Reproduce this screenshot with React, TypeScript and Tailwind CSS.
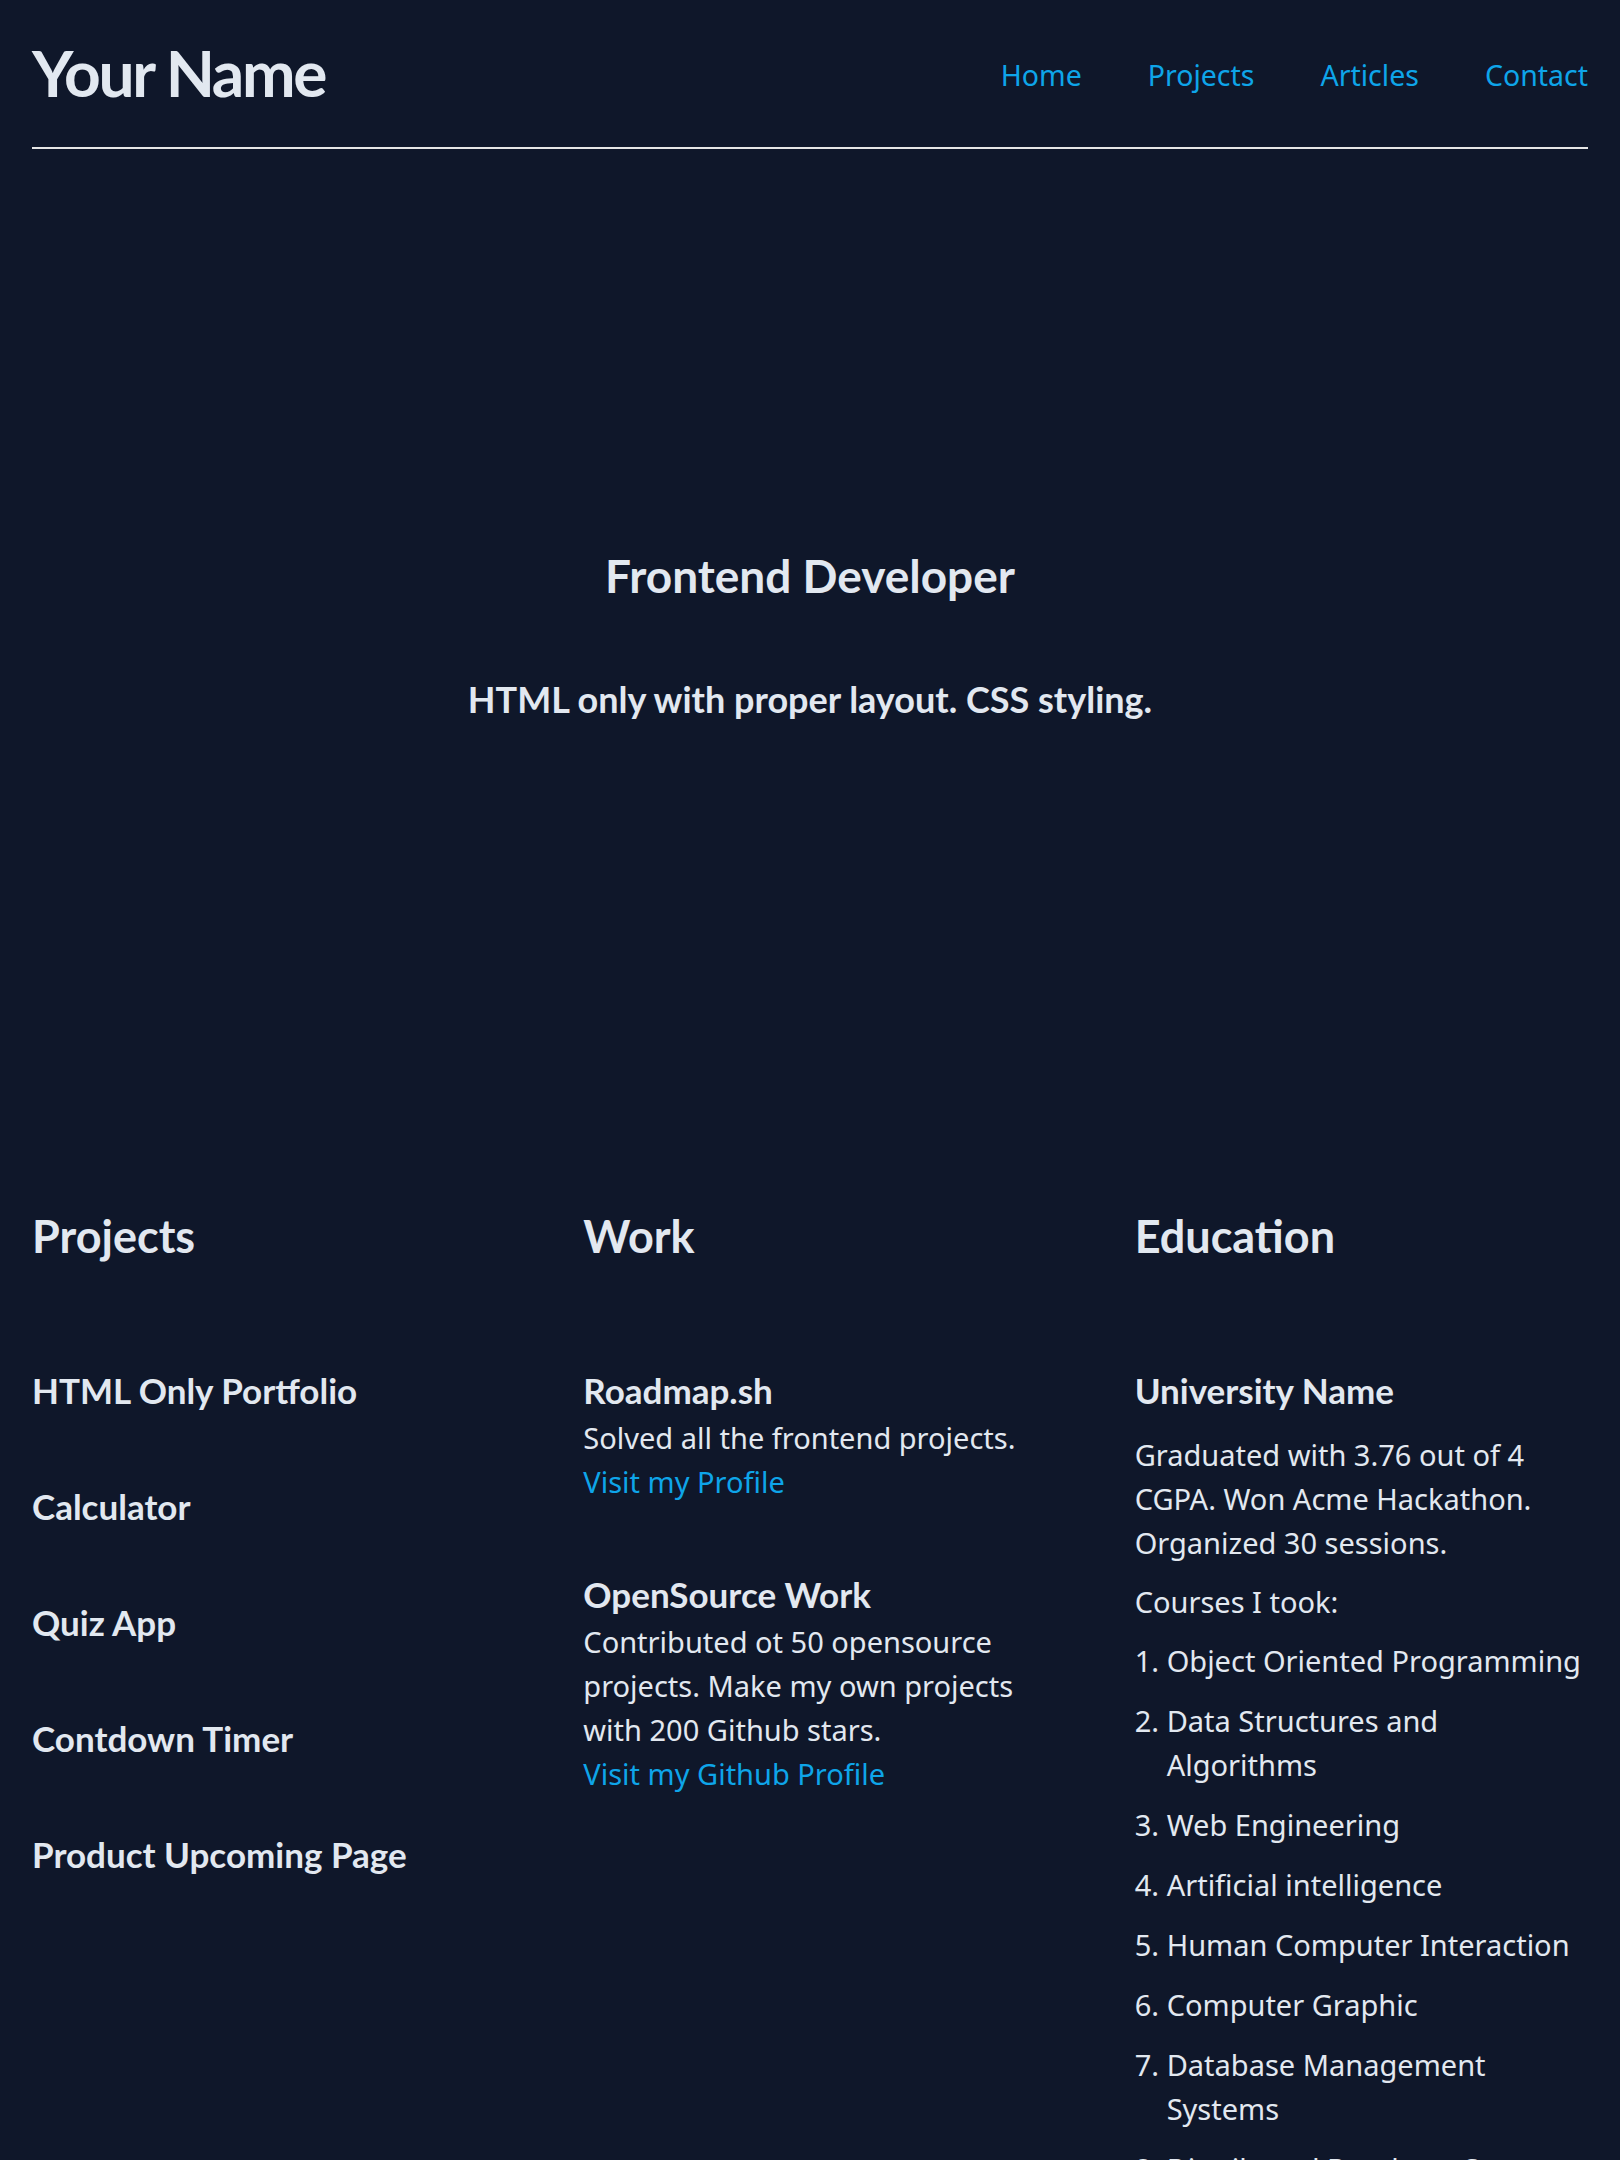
import React from "react";

const projects = [
  "HTML Only Portfolio",
  "Calculator",
  "Quiz App",
  "Contdown Timer",
  "Product Upcoming Page",
];

const courses = [
  "Object Oriented Programming",
  "Data Structures and Algorithms",
  "Web Engineering",
  "Artificial intelligence",
  "Human Computer Interaction",
  "Computer Graphic",
  "Database Management Systems",
  "Distributed Database Systems",
];

function SectionTitle({ children }: { children: React.ReactNode }) {
  return (
    <h2 className="font-['Lato',sans-serif] font-bold text-[45px] leading-[56px]">
      {children}
    </h2>
  );
}

function ItemTitle({ children }: { children: React.ReactNode }) {
  return (
    <h3 className="font-['Lato',sans-serif] font-bold text-[35px] leading-[44px]">
      {children}
    </h3>
  );
}

export default function App() {
  return (
    <div className="min-h-screen bg-[#0f172a] text-[#e2e8f0] px-[32px] font-['Noto_Sans',sans-serif]">
      <header className="flex items-start justify-between pt-[37px] pb-[38px] border-b-2 border-[#e5e5e5]">
        <h1 className="font-['Lato',sans-serif] font-bold text-[64px] leading-[72px] tracking-[-2.3px]">
          Your Name
        </h1>
        <nav className="mt-[18px] flex gap-[66px] text-[28.5px] leading-[40px] text-[#0ea5e9]">
          <a href="#">Home</a>
          <a href="#">Projects</a>
          <a href="#">Articles</a>
          <a href="#">Contact</a>
        </nav>
      </header>

      <section className="flex flex-col items-center pt-[399px] font-['Lato',sans-serif] font-bold">
        <h2 className="text-[46px] leading-[56px]">Frontend Developer</h2>
        <p className="mt-[73px] text-[36px] leading-[44px]">
          HTML only with proper layout. CSS styling.
        </p>
      </section>

      <div className="mt-[487px] grid grid-cols-3 gap-x-[98px] text-[29px] leading-[44px]">
        <section>
          <SectionTitle>Projects</SectionTitle>
          <div className="mt-[104px] flex flex-col gap-[72px]">
            {projects.map((p) => (
              <ItemTitle key={p}>{p}</ItemTitle>
            ))}
          </div>
        </section>

        <section>
          <SectionTitle>Work</SectionTitle>
          <div className="mt-[104px] flex flex-col gap-[68px]">
            <div>
              <ItemTitle>Roadmap.sh</ItemTitle>
              <p className="mt-[4px]">Solved all the frontend projects.</p>
              <a href="#" className="block text-[#0ea5e9]">
                Visit my Profile
              </a>
            </div>
            <div>
              <ItemTitle>OpenSource Work</ItemTitle>
              <p className="mt-[4px]">
                Contributed ot 50 opensource projects. Make my own projects with 200 Github stars.
              </p>
              <a href="#" className="block text-[#0ea5e9]">
                Visit my Github Profile
              </a>
            </div>
          </div>
        </section>

        <section>
          <SectionTitle>Education</SectionTitle>
          <div className="mt-[104px]">
            <ItemTitle>University Name</ItemTitle>
            <p className="mt-[21px]">
              Graduated with 3.76 out of 4 CGPA. Won Acme Hackathon. Organized 30 sessions.
            </p>
            <p className="mt-[15px]">Courses I took:</p>
            <ol className="mt-[15px] list-decimal pl-[32px] flex flex-col gap-[16px]">
              {courses.map((c) => (
                <li key={c}>{c}</li>
              ))}
            </ol>
          </div>
        </section>
      </div>
    </div>
  );
}
